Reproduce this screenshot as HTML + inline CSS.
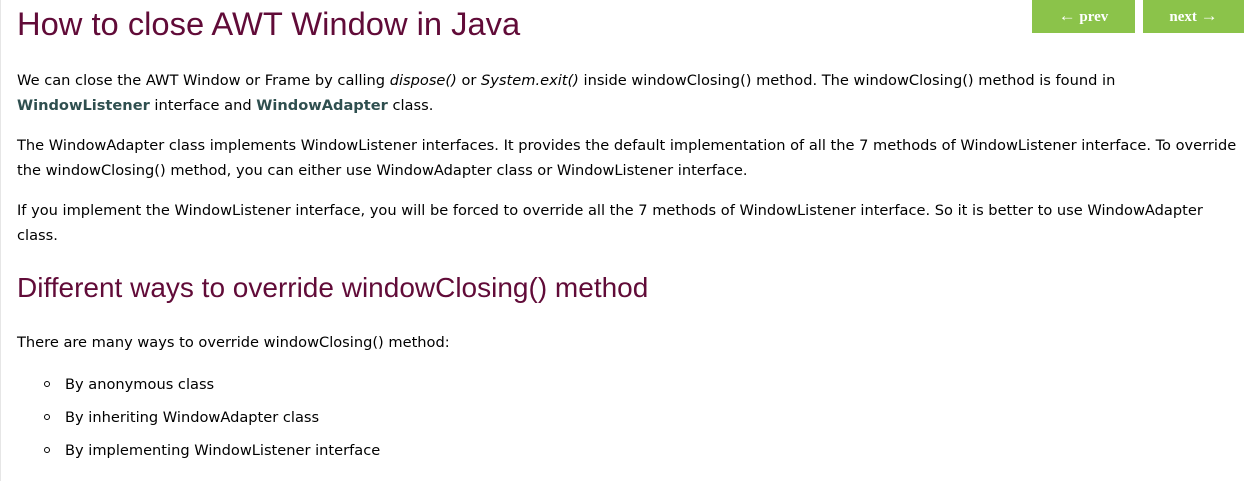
<!DOCTYPE html>
<html><head><meta charset="utf-8"><style>
body{margin:0;width:1249px;height:481px;background:#fff;position:relative;overflow:hidden;font-family:"DejaVu Sans",Verdana,sans-serif;color:#000;}
.bl{position:absolute;left:0;top:0;width:1px;height:481px;background:#e6e6e6;}
h1,h2{position:absolute;left:17px;margin:0;font-family:"Liberation Sans",Arial,sans-serif;font-weight:normal;color:#610B38;white-space:nowrap;}
h1{top:5px;font-size:32.7px;}
h2{top:272px;font-size:28px;}
.btn{position:absolute;top:0;height:33px;background:#8BC34A;color:#fff;font-family:"Liberation Serif",serif;font-weight:bold;font-size:15px;line-height:31px;text-align:center;}
.btn span{font-size:17px;}
p,.li{position:absolute;left:17px;margin:0;font-size:14.6px;line-height:25px;width:1240px;white-space:nowrap;}
b{color:#2F4F4F;}
.li{left:65px;}
.li::before{content:"";position:absolute;left:-21px;top:9px;width:4px;height:4px;border:1.3px solid #000;border-radius:50%;}
</style></head><body>
<div class="bl"></div>
<h1>How to close AWT Window in Java</h1>
<div class="btn" style="left:1032px;width:103px"><span>←</span> prev</div>
<div class="btn" style="left:1143px;width:101px">next <span>→</span></div>
<p style="top:68px">We can close the AWT Window or Frame by calling <i>dispose()</i> or <i>System.exit()</i> inside windowClosing() method. The windowClosing() method is found in<br><b>WindowListener</b> interface and <b>WindowAdapter</b> class.</p>
<p style="top:133px">The WindowAdapter class implements WindowListener interfaces. It provides the default implementation of all the 7 methods of WindowListener interface. To override<br>the windowClosing() method, you can either use WindowAdapter class or WindowListener interface.</p>
<p style="top:198px">If you implement the WindowListener interface, you will be forced to override all the 7 methods of WindowListener interface. So it is better to use WindowAdapter<br>class.</p>
<h2>Different ways to override windowClosing() method</h2>
<p style="top:330px">There are many ways to override windowClosing() method:</p>
<div class="li" style="top:372px">By anonymous class</div>
<div class="li" style="top:405px">By inheriting WindowAdapter class</div>
<div class="li" style="top:438px">By implementing WindowListener interface</div>
</body></html>
